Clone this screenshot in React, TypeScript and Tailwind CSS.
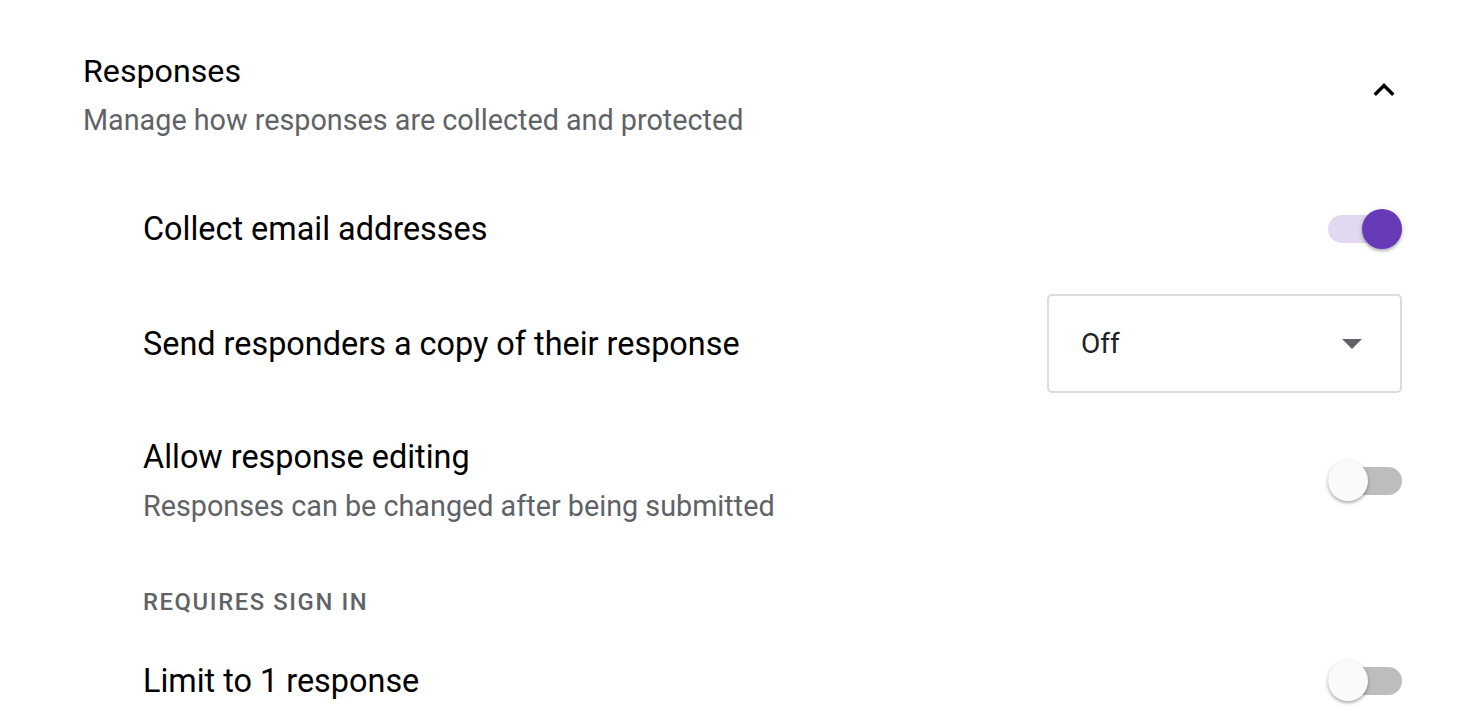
import React from "react";

function Toggle({ on }: { on: boolean }) {
  return (
    <div className="relative w-[74px] h-[40px] flex items-center shrink-0">
      <div className={`w-[74px] h-[28px] rounded-full ${on ? "bg-[#e2d9f1]" : "bg-[#bdbdbd]"}`} />
      <div
        className={`absolute top-0 w-[40px] h-[40px] rounded-full shadow-[0_2px_3px_rgba(0,0,0,0.25),0_1px_6px_rgba(0,0,0,0.12)] ${
          on ? "left-[34px] bg-[#673ab7]" : "left-0 bg-[#fafafa]"
        }`}
      />
    </div>
  );
}

export default function App() {
  return (
    <div className="w-[1480px] h-[718px] bg-white overflow-hidden font-['Roboto',sans-serif] text-[#202124]">
      <div className="pl-[83px] pr-[78px] pt-[50px]">
        <div className="flex items-start justify-between">
          <div>
            <div className="text-[32.2px] leading-[42px] text-black">Responses</div>
            <div className="text-[28.75px] leading-[40px] mt-[8px] text-[#5f6368]">Manage how responses are collected and protected</div>
          </div>
          <svg width="42" height="42" viewBox="0 0 24 24" className="mt-[19px] mr-[-3px]">
            <path d="M7.41 15.41L12 10.83l4.59 4.58L18 14l-6-6-6 6z" fill="#000" />
          </svg>
        </div>

        <div className="pl-[60px] pt-[59px]">
          <div className="flex items-center justify-between h-[60px]">
            <div className="text-[32.4px] leading-[44px] text-black">Collect email addresses</div>
            <Toggle on />
          </div>
          <div className="flex items-center justify-between mt-[35px]">
            <div className="text-[32.4px] leading-[44px] text-black">Send responders a copy of their response</div>
            <div className="w-[355px] h-[99px] border-2 border-[#dadce0] rounded-[5px] flex items-center justify-between pl-[32px] pr-[38px]">
              <span className="text-[28px] leading-[40px] text-[#202124]">Off</span>
              <svg width="20" height="10" viewBox="0 0 20 10">
                <path d="M0 0 L20 0 L10 10 Z" fill="#5f6368" />
              </svg>
            </div>
          </div>
          <div className="flex items-center justify-between mt-[42px]">
            <div>
              <div className="text-[32.4px] leading-[44px] text-black">Allow response editing</div>
              <div className="text-[28.75px] leading-[40px] mt-[7px] text-[#5f6368]">Responses can be changed after being submitted</div>
            </div>
            <Toggle on={false} />
          </div>
          <div className="mt-[61px] text-[23.8px] font-medium tracking-[1.6px] text-[#5f6368] leading-[30px]">REQUIRES SIGN IN</div>
          <div className="flex items-center justify-between h-[60px] mt-[34px]">
            <div className="text-[32.4px] leading-[44px] text-black">Limit to 1 response</div>
            <Toggle on={false} />
          </div>
        </div>
      </div>
    </div>
  );
}
